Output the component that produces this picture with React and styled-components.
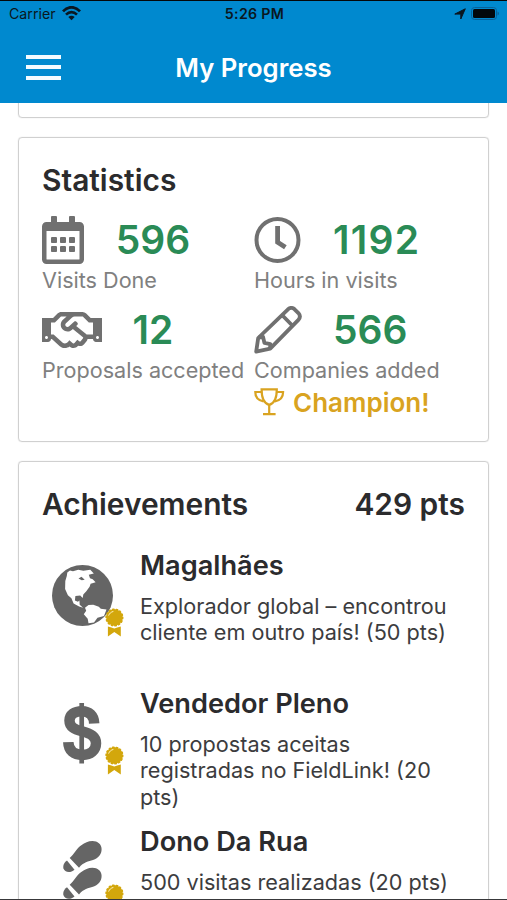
import React from 'react';
import styled, { createGlobalStyle } from 'styled-components';
import { FaRegCalendarAlt, FaRegHandshake } from 'react-icons/fa';

const GlobalStyle = createGlobalStyle`
  * {
    box-sizing: border-box;
  }

  body {
    margin: 0;
    background: #fff;
    font-family: Inter, 'Liberation Sans', sans-serif;
    color: #2b2b2d;
  }
`;

const Screen = styled.div`
  display: flex;
  flex-direction: column;
  width: 507px;
  height: 900px;
  overflow: hidden;
  border-top: 1px solid #05080a;
  border-bottom: 1px solid #38383a;
`;

const Header = styled.header`
  flex: none;
  height: 102px;
  background: #0089cf;
`;

const StatusBar = styled.div`
  display: grid;
  grid-template-columns: 1fr auto 1fr;
  align-items: center;
  height: 25px;
  padding: 0 7px 0 9px;
  font-size: 14.2px;
  color: #0a1720;
`;

const Carrier = styled.div`
  display: flex;
  align-items: center;
  gap: 6px;
`;

const Time = styled.div`
  font-size: 14.2px;
  font-weight: 600;
  letter-spacing: 0.3px;
`;

const Indicators = styled.div`
  display: flex;
  align-items: center;
  justify-content: flex-end;
  gap: 5px;
`;

const TitleBar = styled.div`
  display: grid;
  grid-template-columns: 1fr auto 1fr;
  align-items: center;
  height: 84px;
  margin-top: -1px;
  padding: 0 26px;
`;

const Menu = styled.button`
  display: flex;
  flex-direction: column;
  justify-content: space-between;
  width: 35px;
  height: 25px;
  padding: 0;
  border: 0;
  background: none;
`;

const MenuLine = styled.span`
  height: 4px;
  background: #f4fbff;
`;

const Title = styled.h1`
  margin: 0;
  font-size: 25.7px;
  font-weight: 600;
  color: #fff;
`;

const Content = styled.main`
  flex: 1;
  min-height: 0;
  overflow: hidden;
  padding: 0 18px;
`;

const Card = styled.section`
  height: ${props => props.$height}px;
  margin-bottom: 19px;
  padding: 23px 23px 0;
  border: 1px solid #d0d0d0;
  border-radius: 4px;
  box-shadow: 0 0 1px #ccc;
`;

const PreviousCard = styled(Card)`
  margin-top: -5px;
  padding: 0;
`;

const CardHeader = styled.div`
  display: flex;
  justify-content: space-between;
`;

const CardTitle = styled.h2`
  margin: 0;
  font-size: 29.9px;
  font-weight: 600;
  line-height: 38px;
`;

const Stats = styled.div`
  display: grid;
  grid-template-columns: 212px 1fr;
  grid-template-rows: 90px auto;
  margin-top: 16px;
`;

const Figure = styled.div`
  display: flex;
  align-items: center;
  height: 50px;
  color: #707070;
`;

const IconSlot = styled.div`
  display: flex;
  align-items: center;
  width: 60px;
  height: 50px;
`;

const Value = styled.div`
  width: 104px;
  margin-top: -2px;
  margin-left: ${props => (props.$centered ? -1 : 19)}px;
  text-align: ${props => (props.$centered ? 'center' : 'left')};
  font-size: 39px;
  font-weight: 600;
  letter-spacing: ${props => props.$spacing || 0}px;
  color: #2a8b56;
`;

const Label = styled.div`
  font-size: 21.6px;
  line-height: 30px;
  margin-bottom: -2px;
  white-space: nowrap;
  color: #808080;
`;

const Champion = styled.div`
  display: flex;
  align-items: center;
  gap: 8px;
  height: 38px;
  font-size: 26px;
  font-weight: 600;
  color: #d9a320;
`;

const List = styled.ul`
  margin: 25px 0 0;
  padding: 0;
  list-style: none;
`;

const Row = styled.li`
  display: flex;
  height: 138px;
`;

const Picture = styled.div`
  position: relative;
  flex: none;
  display: flex;
  justify-content: center;
  width: 82px;
  height: 95px;
  padding: 17px 1px 0 0;
  color: #656565;
`;

const BadgeSlot = styled.div`
  position: absolute;
  left: 63px;
  top: 60px;
  line-height: 0;
`;

const Info = styled.div`
  flex: 1;
  margin-left: 16px;
`;

const Name = styled.h3`
  margin: 0;
  font-size: 27.2px;
  font-weight: 600;
  line-height: 36px;
  white-space: nowrap;
`;

const Description = styled.p`
  width: 318px;
  margin: 9px 0 0;
  font-size: 21.65px;
  line-height: 26.4px;
  color: #3c3c3e;
`;

const Wifi = () => (
  <svg width="19" height="15" viewBox="0 0 19 15" fill="none" stroke="#0a1720">
    <path d="M1 5.4C6-.1 13-.1 18 5.4" strokeWidth="2.8" />
    <path d="M4 8.7c3.4-3.5 7.6-3.5 11 0" strokeWidth="2.6" />
    <path d="M9.5 14.2L6.3 11c2-1.8 4.4-1.8 6.4 0z" fill="#0a1720" stroke="none" />
  </svg>
);

const Location = () => (
  <svg width="12" height="12" viewBox="0 0 12 12" fill="#0a1720">
    <path
      d="M11.300.800L6.800 11V6.100H.800z"
      stroke="#0a1720"
      strokeWidth="1"
      strokeLinejoin="round"
    />
  </svg>
);

const Battery = () => (
  <svg width="29" height="13" viewBox="0 0 29 13">
    <rect x="0.5" y="0.5" width="25" height="12" rx="3" fill="none" stroke="#08629a" />
    <rect x="2" y="2" width="22" height="9" rx="1.5" fill="#02080c" />
    <path d="M26.5 4.5c2 .8 2 3.2 0 4z" fill="#08629a" />
  </svg>
);

const Clock = () => (
  <svg width="48" height="48" viewBox="0 0 48 48" fill="none" stroke="currentColor">
    <circle cx="23.5" cy="24" r="21" strokeWidth="4" />
    <path d="M23.6 10v16.3l7.8 5" strokeWidth="4.8" />
  </svg>
);

const Pencil = () => (
  <svg
    width="48"
    height="48"
    viewBox="0 0 48 48"
    fill="none"
    stroke="currentColor"
    strokeWidth="3.8"
    strokeLinejoin="round"
  >
    <path d="M2.200 45.600l2-13.600L34 3.300q3.400-2.800 6.600 0l3.800 3.800q3 3.500 0 6.800L16.200 42.600z" />
    <path d="M28.500 9.500l9.800 10M4.400 31.600l4.600-.8 1.400 6 6 1.300-.4 4.400" />
  </svg>
);

const Trophy = () => (
  <svg width="31" height="28" viewBox="0 0 31 28" fill="none" stroke="currentColor" strokeWidth="2.2">
    <path d="M7.600 1.300h15.200c0 7.400-2 14.200-7.600 15.600C9.600 15.500 7.600 8.700 7.600 1.300z" />
    <path d="M7.600 4H1.300c0 5 2.600 8.400 8.200 9.300M22.800 4h6.300c0 5-2.600 8.400-8.200 9.300M15.200 17v8.800M9 26.200h12.600" />
  </svg>
);

const Globe = () => (
  <svg width="61" height="61" viewBox="0 0 61 61">
    <circle cx="30.5" cy="30.5" r="30.5" fill="currentColor" />
    <path
      d="M15.300 7.500L18 5.500l3 .8 5.300-1.500 5 1 7-1 3.500 3.700-5 1.300 1.200 3.400 2.700 1 2.900 3-5 1.500-1 3-3.300 4.500-3 3.300-.6 3.500-2.500-2.600-4.800.6-.5 4.500 3 1.200 1.500-1.200.3 4.300 3.400 3-4-1.400-5.500-3-2.200-5.200-3.500-3-2.800-6.200.2-8 1.500-5z"
      fill="#fff"
    />
    <path d="M26.500 13.500l3-1.700 3.200 3-3 .5z" fill="currentColor" />
    <path
      d="M33 42.700l3.500-2.600 4.800-.3 5.500 2 2 2 5.700.6-2.500 6.500-6.500 1.800-3.500 4.800-5.500.8-.8-4.500-3.900-4.600 2.400-3.500z"
      fill="#fff"
    />
  </svg>
);

const Dollar = () => (
  <svg width="39" height="61" viewBox="0 0 39 61" fill="none" stroke="currentColor">
    <path
      d="M31.200 20.500C31 12.500 26 8.200 19 8.200c-7.800 0-12.500 3.800-12.500 9.300 0 6.500 5 8.800 12.500 10.800 9.500 2.500 14 5.500 14 12 0 7.200-5.500 11.600-13.500 11.600-9 0-14-4.400-14.200-12.700"
      strokeWidth="10.5"
    />
    <path d="M18.700 0v60.500" strokeWidth="4.7" />
  </svg>
);

const Shoes = () => (
  <svg width="39" height="58" viewBox="0 0 39 58" fill="currentColor">
    <g id="shoe">
      <path d="M6.700 17C11 13.500 13.500 7.500 18.300 4.300 22 1.700 25 0 29.500 0 34.500 0 38.600 3 38.600 8c0 5.500-3 9-8.600 11-4.500 1.500-9.500 2-14 7.700z" />
      <path d="M4 19.500l7.500 9.200C7 32.500 1.500 31.200.4 27.200-.2 24.500 1 21.500 4 19.500z" />
    </g>
    <use href="#shoe" y="26.8" />
  </svg>
);

const Badge = () => (
  <svg width="19" height="29" viewBox="0 0 19 29">
    <circle cx="9.4" cy="9.5" r="8.2" fill="#d3a70c" />
    <circle
      cx="9.4"
      cy="9.5"
      r="8.1"
      fill="none"
      stroke="#d3a70c"
      strokeWidth="2"
      strokeLinecap="round"
      strokeDasharray="1 2.635"
    />
    <path d="M3.600 7.600c.8-2.200 2.400-3.600 4.800-4.200" fill="none" stroke="#fff3c0" strokeWidth="1" />
    <path d="M2.900 18.400l3.500 1 2.900 1 3-1 3.500-1v10.100l-6.500-4.600-6.400 4.600z" fill="#d3a70c" />
  </svg>
);

const achievements = [
  {
    name: 'Magalhães',
    icon: <Globe />,
    text: 'Explorador global – encontrou cliente em outro país! (50 pts)',
  },
  {
    name: 'Vendedor Pleno',
    icon: <Dollar />,
    text: '10 propostas aceitas registradas no FieldLink! (20 pts)',
  },
  {
    name: 'Dono Da Rua',
    icon: <Shoes />,
    text: '500 visitas realizadas (20 pts)',
  },
];

const Stat = ({ icon, value, label, centered, spacing, children }) => (
  <div>
    <Figure>
      <IconSlot>{icon}</IconSlot>
      <Value $centered={centered} $spacing={spacing}>
        {value}
      </Value>
    </Figure>
    <Label>{label}</Label>
    {children}
  </div>
);

const Achievement = ({ name, icon, text }) => (
  <Row>
    <Picture>
      {icon}
      <BadgeSlot>
        <Badge />
      </BadgeSlot>
    </Picture>
    <Info>
      <Name>{name}</Name>
      <Description>{text}</Description>
    </Info>
  </Row>
);

const CalendarIcon = styled(FaRegCalendarAlt)`
  margin-left: -3px;
`;

const App = () => (
  <Screen>
    <GlobalStyle />
    <Header>
      <StatusBar>
        <Carrier>
          Carrier
          <Wifi />
        </Carrier>
        <Time>5:26 PM</Time>
        <Indicators>
          <Location />
          <Battery />
        </Indicators>
      </StatusBar>
      <TitleBar>
        <Menu aria-label="Menu">
          <MenuLine />
          <MenuLine />
          <MenuLine />
        </Menu>
        <Title>My Progress</Title>
      </TitleBar>
    </Header>
    <Content>
      <PreviousCard $height={20} />
      <Card $height={305}>
        <CardTitle>Statistics</CardTitle>
        <Stats>
          <Stat icon={<CalendarIcon size={48} />} value="596" label="Visits Done" centered />
          <Stat icon={<Clock />} value="1192" label="Hours in visits" spacing={1.3} />
          <Stat icon={<FaRegHandshake size={60} />} value="12" label="Proposals accepted" centered />
          <Stat icon={<Pencil />} value="566" label="Companies added">
            <Champion>
              <Trophy />
              Champion!
            </Champion>
          </Stat>
        </Stats>
      </Card>
      <Card $height={520}>
        <CardHeader>
          <CardTitle>Achievements</CardTitle>
          <CardTitle>429 pts</CardTitle>
        </CardHeader>
        <List>
          {achievements.map(item => (
            <Achievement key={item.name} {...item} />
          ))}
        </List>
      </Card>
    </Content>
  </Screen>
);

export default App;
